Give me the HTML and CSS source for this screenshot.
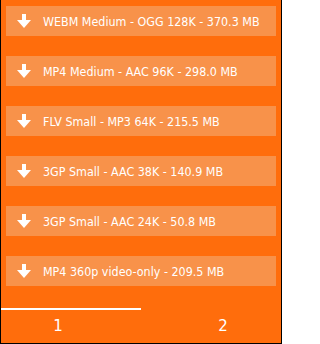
FILE: index.html
```html
<!DOCTYPE html>
<html>
<head>
<meta charset="utf-8">
<link rel="stylesheet" href="styles.css">
</head>
<body>
<div class="app">
  <div class="list">
    <div class="item"><svg class="ico" viewBox="0 0 14 14"><path d="M5 0h4v6h5l-7 8-7-8h5z" fill="#fff"/></svg><span>WEBM Medium - OGG 128K - 370.3 MB</span></div>
    <div class="item"><svg class="ico" viewBox="0 0 14 14"><path d="M5 0h4v6h5l-7 8-7-8h5z" fill="#fff"/></svg><span>MP4 Medium - AAC 96K - 298.0 MB</span></div>
    <div class="item"><svg class="ico" viewBox="0 0 14 14"><path d="M5 0h4v6h5l-7 8-7-8h5z" fill="#fff"/></svg><span>FLV Small - MP3 64K - 215.5 MB</span></div>
    <div class="item"><svg class="ico" viewBox="0 0 14 14"><path d="M5 0h4v6h5l-7 8-7-8h5z" fill="#fff"/></svg><span>3GP Small - AAC 38K - 140.9 MB</span></div>
    <div class="item"><svg class="ico" viewBox="0 0 14 14"><path d="M5 0h4v6h5l-7 8-7-8h5z" fill="#fff"/></svg><span>3GP Small - AAC 24K - 50.8 MB</span></div>
    <div class="item"><svg class="ico" viewBox="0 0 14 14"><path d="M5 0h4v6h5l-7 8-7-8h5z" fill="#fff"/></svg><span>MP4 360p video-only - 209.5 MB</span></div>
  </div>
  <div class="tabs">
    <div class="tab tab-active"><span class="tab-label tab-label-1">1</span></div>
    <div class="tab"><span class="tab-label tab-label-2">2</span></div>
  </div>
</div>
</body>
</html>
```
FILE: styles.css
```css
html, body {
  margin: 0;
  padding: 0;
}
body {
  width: 282px;
  height: 344px;
  overflow: hidden;
  font-family: "DejaVu Sans", "Liberation Sans", sans-serif;
}
.app {
  box-sizing: border-box;
  width: 282px;
  height: 344px;
  background: #ff6d0c;
  border: 1px solid #000;
  border-top: none;
  display: flex;
  flex-direction: column;
  color: #fff;
}
.list {
  display: flex;
  flex-direction: column;
  gap: 20px;
  padding: 6px 5px 0 5px;
  height: 308px;
  box-sizing: border-box;
}
.item {
  height: 30px;
  background: #f8924a;
  display: flex;
  align-items: center;
  padding-left: 11px;
  gap: 12px;
  font-family: "DejaVu Sans Condensed", "DejaVu Sans", sans-serif;
  font-size: 12.4px;
  white-space: nowrap;
}
.ico {
  width: 14px;
  height: 14px;
  flex: none;
  margin-top: -1px;
}
.tabs {
  display: grid;
  grid-template-columns: 140px 140px;
  height: 35px;
}
.tab {
  border-top: 2px solid transparent;
  display: flex;
  justify-content: center;
  padding-top: 7px;
  font-size: 15px;
}
.tab-active {
  border-top-color: #fff;
}
.tab-label-1 {
  margin-right: 26px;
}
.tab-label-2 {
  margin-left: 24px;
}
```
